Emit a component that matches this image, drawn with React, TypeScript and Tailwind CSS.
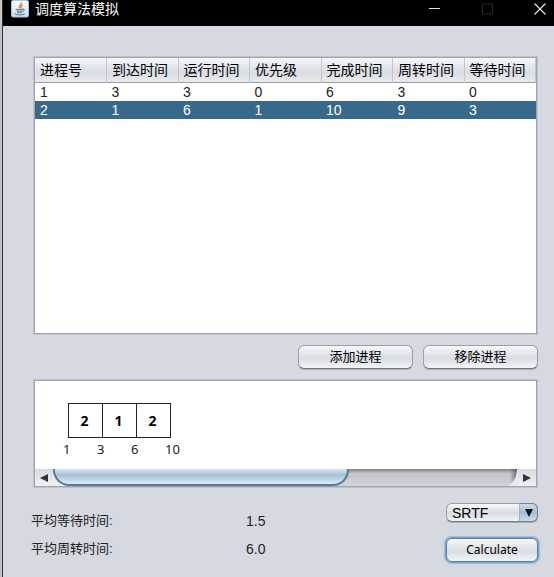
import React, { useState } from 'react';

interface Process {
  id: number;
  arrival: number;
  burst: number;
  priority: number;
  finish: number;
  turnaround: number;
  waiting: number;
}

const COLUMNS: { key: keyof Process; title: string }[] = [
  { key: 'id', title: '进程号' },
  { key: 'arrival', title: '到达时间' },
  { key: 'burst', title: '运行时间' },
  { key: 'priority', title: '优先级' },
  { key: 'finish', title: '完成时间' },
  { key: 'turnaround', title: '周转时间' },
  { key: 'waiting', title: '等待时间' },
];

const PROCESSES: Process[] = [
  { id: 1, arrival: 3, burst: 3, priority: 0, finish: 6, turnaround: 3, waiting: 0 },
  { id: 2, arrival: 1, burst: 6, priority: 1, finish: 10, turnaround: 9, waiting: 3 },
];

const SLICES = [2, 1, 2];
const TICKS = [1, 3, 6, 10];

const nimbusFace = 'rounded-md border bg-linear-to-b from-[#f8f8fa] via-[#d9dce2] via-55% to-[#f2f4f8] text-black';
const nimbusButton = `${nimbusFace} border-[#9a9ea6] border-b-[#747880] shadow-[0_1px_0_#a9adb5]`;
const nimbusFocused = `${nimbusFace} border-[#5f7f9c] shadow-[0_0_0_1px_#73a4d1,0_0_1px_2px_#9dbddb]`;

const JavaIcon = () => (
  <svg viewBox="0 0 18 18" className="h-[18px] w-[18px] shrink-0" aria-hidden="true">
    <defs>
      <linearGradient id="javaBg" x1="0" y1="0" x2="0" y2="1">
        <stop offset="0" stopColor="#ffffff" />
        <stop offset="1" stopColor="#c3dcef" />
      </linearGradient>
    </defs>
    <rect x="0.5" y="0.5" width="17" height="16.5" rx="1.500" fill="url(#javaBg)" stroke="#a9c3d8" />
    <path d="M10.200 2.800c.6 2-3 2.600-1.700 5.200M11.400 5.200c-1.900.9-1.900 1.600-1.100 2.800" fill="none" stroke="#ea8a3a" strokeWidth="1.500" strokeLinecap="round" />
    <path d="M5.200 9.200c1.500.7 5 .7 6.600 0M6 10.900c1.300.6 3.800.6 5.200 0M6.500 12.500c1.200.5 3 .5 4.200 0M3.800 13.800c1 1.500 8.200 1.500 9.800.2M12.200 9.100c1.900-.2 1.600 1.700-.2 2.300" fill="none" stroke="#4d7593" strokeWidth="1" strokeLinecap="round" />
  </svg>
);

const TitleBar = () => (
  <header className="flex h-[26px] items-start bg-black pl-2 text-white">
    <JavaIcon />
    <h1 className="flex-1 pl-1.5 text-sm leading-[18px]">调度算法模拟</h1>
    <div className="flex">
      <button type="button" aria-label="最小化" className="flex h-[18px] w-[53px] items-center justify-center">
        <svg viewBox="0 0 12 12" className="h-3 w-3">
          <path d="M0 5.500h11" stroke="#e4e4e4" />
        </svg>
      </button>
      <button type="button" aria-label="最大化" disabled className="flex h-[18px] w-[53px] items-center justify-center">
        <svg viewBox="0 0 12 12" className="h-3 w-3">
          <rect x="0.5" y="1" width="10" height="10" rx="0.500" fill="none" stroke="#2a2a2a" />
        </svg>
      </button>
      <button type="button" aria-label="关闭" className="flex h-[18px] w-[40px] items-center justify-end pr-2 pl-5">
        <svg viewBox="0 0 12 12" className="h-3 w-3">
          <path d="M0.500 0.500l11 11M11.500 0.500l-11 11" stroke="#e4e4e4" strokeWidth="1.200" />
        </svg>
      </button>
    </div>
  </header>
);

// Sunken white viewport with the two-tone frame shared by table and chart
const Viewport = ({ children }: { children: React.ReactNode }) => (
  <div className="border border-[#bfc2cb] bg-[#a0a4b0] p-px">{children}</div>
);

const ProcessTable = () => {
  const [selected, setSelected] = useState(2);

  return (
    <Viewport>
      <div className="h-[275px] bg-white">
        <table className="w-full table-fixed border-collapse text-left">
          <thead>
            <tr className="h-6 border-b border-[#979ba6] bg-linear-to-b from-[#f6f7f9] via-[#d9dce2] via-60% to-[#e8ebf0]">
              {COLUMNS.map((col) => (
                <th key={col.key} scope="col" className="border-r border-[#c3c6ce] p-0 pl-[5px] text-sm leading-6 font-normal">
                  {col.title}
                </th>
              ))}
            </tr>
          </thead>
          <tbody>
            {PROCESSES.map((p) => (
              <tr
                key={p.id}
                onClick={() => setSelected(p.id)}
                className={p.id === selected ? 'h-[18px] bg-[#39698a] text-white' : 'h-[18px] text-[#222]'}
              >
                {COLUMNS.map((col) => (
                  <td key={col.key} className="p-0 pl-[5px] text-sm leading-[18px]">
                    {p[col.key]}
                  </td>
                ))}
              </tr>
            ))}
          </tbody>
        </table>
      </div>
    </Viewport>
  );
};

const ScrollBar = () => (
  <div className="flex h-[17px] bg-linear-to-b from-[#7d8085] via-[#c3c4c8] via-25% to-[#d3d4d8]">
    <button type="button" aria-label="向左滚动" className="flex w-[18px] items-center justify-center bg-linear-to-b from-[#d5d8dd] to-[#f1f2f4]">
      <svg viewBox="0 0 8 8" className="h-2 w-2">
        <path d="M8 0v8L0 4z" fill="#333" />
      </svg>
    </button>
    <div className="flex flex-1 bg-linear-to-r from-[#eceef0] from-5% to-transparent to-5%">
      <div className="w-[65%] rounded-b-2xl border-x-2 border-b-2 border-[#5b7890] bg-linear-to-b from-[#dbe5ee] via-[#a9bfd2] via-40% to-[#d6f0fb]" />
    </div>
    <div className="flex">
      <svg viewBox="0 0 10 17" className="h-[17px] w-2.5" aria-hidden="true">
        <defs>
          <linearGradient id="capShade" x1="0" y1="0" x2="1" y2="0">
            <stop offset="0.200" stopColor="#555" stopOpacity="0" />
            <stop offset="1" stopColor="#444" />
          </linearGradient>
        </defs>
        <path d="M0 0h9c0 8-3 13-9 17z" fill="url(#capShade)" opacity="0.700" />
        <path d="M9 0c0 8-3 13-9 17h10V0z" fill="#e8eaed" />
      </svg>
      <button type="button" aria-label="向右滚动" className="flex w-[18px] items-center justify-center bg-linear-to-b from-[#d5d8dd] to-[#f1f2f4]">
        <svg viewBox="0 0 8 8" className="h-2 w-2">
          <path d="M0 0v8L8 4z" fill="#333" />
        </svg>
      </button>
    </div>
  </div>
);

const GanttChart = () => (
  <Viewport>
    <div className="flex h-[105px] flex-col bg-white font-['Noto_Sans','Noto_Sans_CJK_SC',sans-serif]">
      <div className="flex-1 pt-[22px] pl-[33px]">
        <div className="flex">
          {SLICES.map((id, idx) => (
            <div
              key={idx}
              className="-mr-px flex h-[35px] w-[35px] items-center justify-center border border-[#222] pr-0.5 text-sm font-bold"
            >
              {id}
            </div>
          ))}
        </div>
        <div className="-ml-[5px] flex pt-0.5 text-[13px] leading-[18px] text-[#222]">
          {TICKS.map((tick) => (
            <span key={tick} className="w-[34px]">{tick}</span>
          ))}
        </div>
      </div>
      <ScrollBar />
    </div>
  </Viewport>
);

export default function App() {
  const [algorithm, setAlgorithm] = useState('SRTF');

  return (
    <div className="min-h-screen border-l-2 border-[#c4c5c2] font-['Liberation_Sans','Noto_Sans_CJK_SC',sans-serif] text-black">
      <div className="min-h-screen border-l border-[#2f3237] bg-[#d6d9e0]">
        <TitleBar />

        <main className="flex flex-col pt-[30px] pr-4 pl-[30px]">
          <ProcessTable />

          <div className="flex justify-end gap-2.5 py-2.5 text-[13px]">
            <button type="button" className={`h-6 w-[115px] ${nimbusButton}`}>添加进程</button>
            <button type="button" className={`h-6 w-[115px] ${nimbusButton}`}>移除进程</button>
          </div>

          <GanttChart />

          <div className="-ml-0.5 flex items-start justify-between pt-[15px]">
            <dl className="grid grid-cols-[215px_auto] pt-1 text-[13px] leading-7 text-[#222]">
              <dt>平均等待时间:</dt>
              <dd className="text-sm leading-7">1.5</dd>
              <dt>平均周转时间:</dt>
              <dd className="text-sm leading-7">6.0</dd>
            </dl>

            <div className="flex w-[92px] flex-col gap-4">
              <div className="relative">
                <select
                  aria-label="调度算法"
                  value={algorithm}
                  onChange={(e) => setAlgorithm(e.target.value)}
                  className={`block h-[19px] w-full appearance-none pl-[5px] text-sm leading-4 ${nimbusButton}`}
                >
                  <option>SRTF</option>
                  <option>FCFS</option>
                  <option>SJF</option>
                  <option>RR</option>
                </select>
                <span className="pointer-events-none absolute inset-y-0 right-0 flex w-[19px] items-center justify-center rounded-r-md border border-[#6f8496] border-l-[#a3b5c5] bg-linear-to-b from-[#cfdce7] via-[#a5bccf] to-[#cbe0ee]">
                  <svg viewBox="0 0 8 8" className="h-2 w-2">
                    <path d="M0 0h8L4 8z" fill="#111" />
                  </svg>
                </span>
              </div>
              <button type="button" className={`h-6 w-full font-['Noto_Sans',sans-serif] text-xs ${nimbusFocused}`}>
                Calculate
              </button>
            </div>
          </div>
        </main>
      </div>
    </div>
  );
}
